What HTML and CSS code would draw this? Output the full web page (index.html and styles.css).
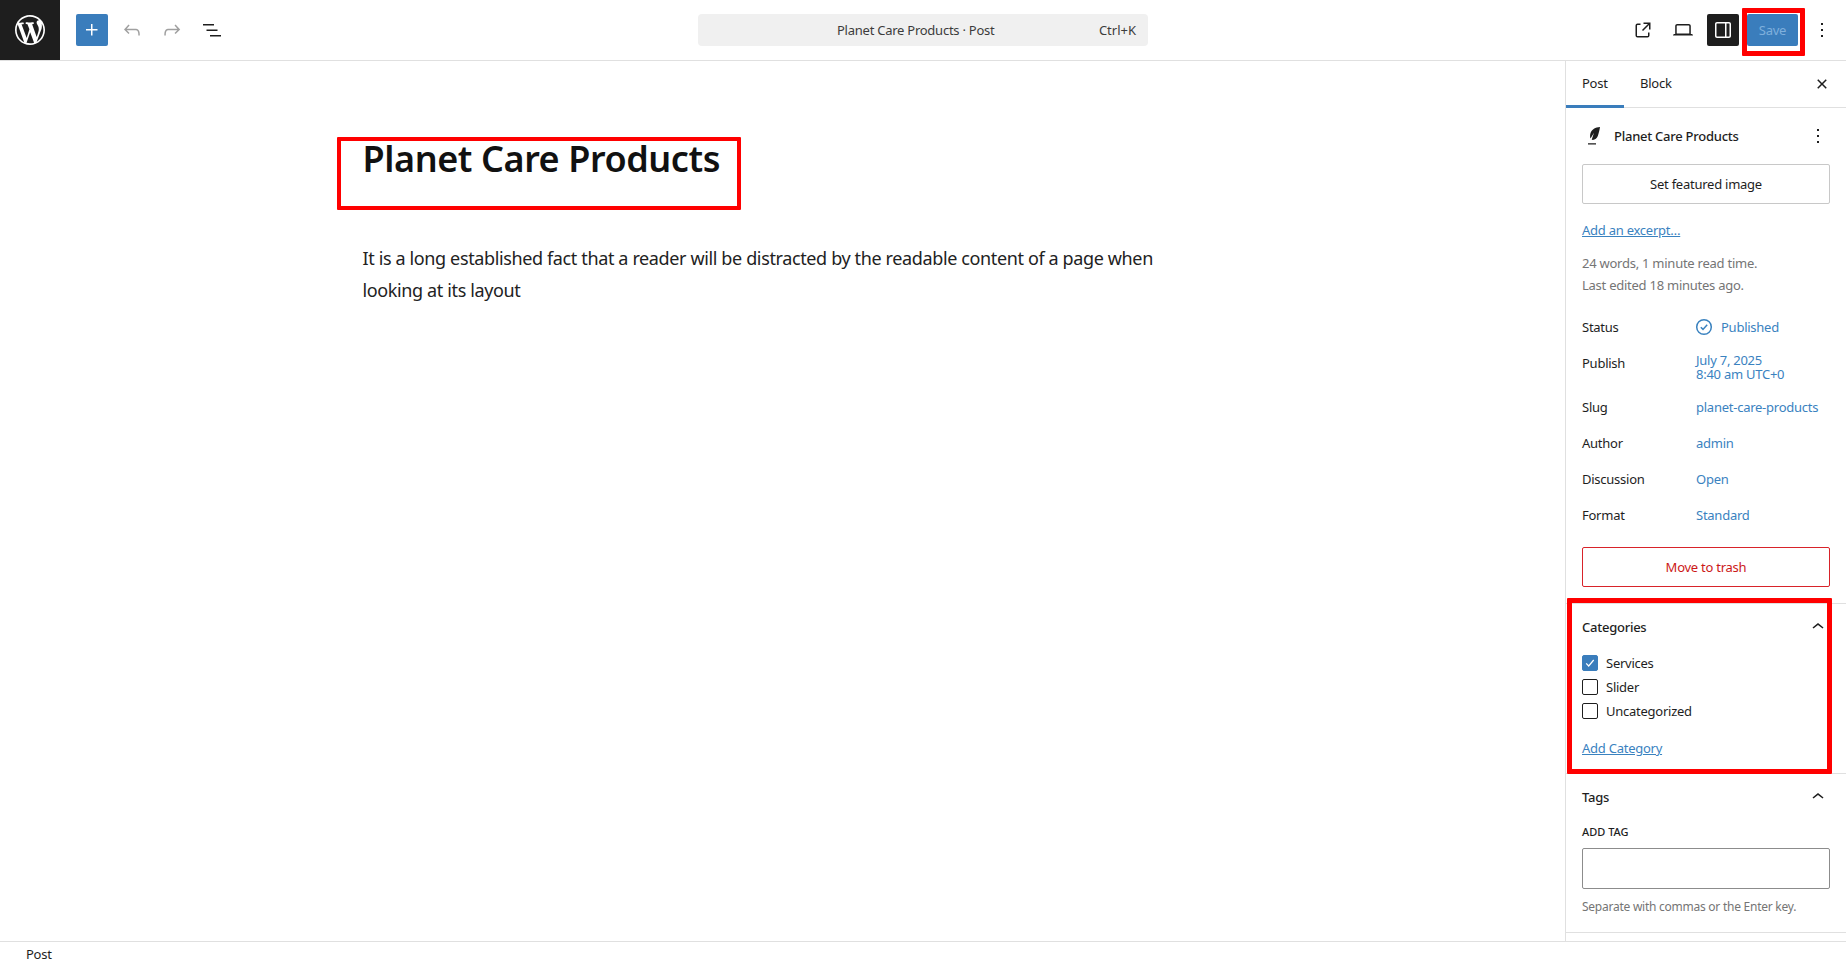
FILE: index.html
```html
<!DOCTYPE html>
<html lang="en">
<head>
<meta charset="utf-8">
<title>Planet Care Products</title>
<link rel="stylesheet" href="styles.css">
</head>
<body>
<div class="app">
  <header class="topbar">
    <div class="top-left">
      <div class="logo"><svg viewBox="0 0 20 20" width="30" height="30"><path fill="#fff" d="M20 10c0-5.51-4.49-10-10-10C4.48 0 0 4.49 0 10c0 5.52 4.48 10 10 10 5.51 0 10-4.48 10-10zM7.78 15.37L4.37 6.22c.55-.02 1.17-.08 1.17-.08.5-.06.44-1.13-.06-1.11 0 0-1.45.11-2.37.11-.18 0-.37 0-.58-.01C4.12 2.69 6.87 1.11 10 1.11c2.33 0 4.45.87 6.05 2.34-.68-.11-1.65.39-1.65 1.58 0 .74.45 1.36.9 2.1.35.61.55 1.36.55 2.46 0 1.49-1.4 5-1.4 5l-3.03-8.37c.54-.02.82-.17.82-.17.5-.05.44-1.25-.06-1.22 0 0-1.44.12-2.38.12-.87 0-2.33-.12-2.33-.12-.5-.03-.56 1.2-.06 1.22l.92.08 1.26 3.41zM17.41 10c.24-.64.74-1.87.43-4.25.7 1.29 1.05 2.71 1.05 4.25 0 3.29-1.73 6.24-4.4 7.78.97-2.59 1.94-5.2 2.92-7.78zM6.1 18.09C3.12 16.65 1.11 13.53 1.11 10c0-1.3.23-2.48.72-3.59C3.25 10.3 4.67 14.2 6.1 18.09zm4.03-6.63l2.58 6.98c-.86.29-1.76.45-2.71.45-.79 0-1.57-.11-2.29-.33.81-2.38 1.62-4.74 2.42-7.1z"/></svg></div>
      <div class="tools">
        <div class="icon-btn add"><svg viewBox="0 0 24 24" width="24" height="24"><path d="M11 12.5V17.5H12.5V12.5H17.5V11H12.5V6H11V11H6V12.5H11Z"/></svg></div>
        <div class="icon-btn muted"><svg viewBox="0 0 24 24" width="24" height="24"><path d="M18.3 11.7c-.6-.6-1.4-.9-2.3-.9H6.7l2.9-3.3-1.1-1-4.5 5L8.5 16l1-1-2.7-2.7H16c.5 0 .9.2 1.3.5 1 1 1 3.4 1 4.5v.3h1.5v-.2c0-1.5 0-4.3-1.5-5.7z"/></svg></div>
        <div class="icon-btn muted"><svg viewBox="0 0 24 24" width="24" height="24"><path d="M15.6 6.5l-1.1 1 2.9 3.3H8c-.9 0-1.7.3-2.3.9-1.4 1.5-1.4 4.2-1.4 5.6v.2h1.5v-.3c0-1.1 0-3.5 1-4.5.3-.3.7-.5 1.3-.5h9.2L14.5 15l1.1 1.1 4.6-4.6-4.6-5z"/></svg></div>
        <div class="icon-btn"><svg viewBox="0 0 24 24" width="24" height="24"><path d="M3 6h11v1.5H3V6Zm3.5 5.5h11V13h-11v-1.5ZM21 17H10v1.5h11V17Z"/></svg></div>
      </div>
    </div>
    <div class="command">
      <span class="command-title">Planet Care Products · Post</span>
      <span class="command-key">Ctrl+K</span>
    </div>
    <div class="top-right">
      <div class="icon-btn"><svg viewBox="0 0 24 24" width="24" height="24"><path d="M19.5 4.5h-7V6h4.44l-5.97 5.97 1.06 1.06L18 7.06v4.44h1.5v-7Zm-13 1a2 2 0 0 0-2 2v10a2 2 0 0 0 2 2h10a2 2 0 0 0 2-2v-3H17v3a.5.5 0 0 1-.5.5h-10a.5.5 0 0 1-.5-.5v-10a.5.5 0 0 1 .5-.5h3V5.5h-3Z"/></svg></div>
      <div class="icon-btn"><svg viewBox="0 0 24 24" width="24" height="24"><path d="M20.5 16h-.7V8c0-1.1-.9-2-2-2H6.2c-1.1 0-2 .9-2 2v8h-.7c-.8 0-1.5.7-1.5 1.5h20c0-.8-.7-1.5-1.5-1.5zM5.7 8c0-.3.2-.5.5-.5h11.6c.3 0 .5.2.5.5v7.6H5.7V8z"/></svg></div>
      <div class="icon-btn dark"><svg viewBox="0 0 24 24" width="24" height="24"><path d="M18 4H6c-1.1 0-2 .9-2 2v12c0 1.1.9 2 2 2h12c1.1 0 2-.9 2-2V6c0-1.1-.9-2-2-2zm-4 14.5H6c-.3 0-.5-.2-.5-.5V6c0-.3.2-.5.5-.5h8v13zm4.500-.5c0 .3-.2.5-.5.5h-2.500v-13H18c.3 0 .5.2.5.5v12z"/></svg></div>
      <div class="save">Save</div>
      <div class="icon-btn"><svg viewBox="0 0 24 24" width="24" height="24"><path d="M13 19h-2v-2h2v2zm0-6h-2v-2h2v2zm0-6h-2V5h2v2z"/></svg></div>
    </div>
  </header>

  <div class="workspace">
    <main class="editor">
      <div class="canvas">
        <h1 class="post-title">Planet Care Products</h1>
        <p class="post-body">It is a long established fact that a reader will be distracted by the readable content of a page when looking at its layout</p>
      </div>
    </main>

    <aside class="sidebar">
      <div class="tabs">
        <div class="tab active">Post</div>
        <div class="tab">Block</div>
        <div class="tab-close"><svg viewBox="0 0 24 24" width="24" height="24"><path d="M12 13.06l3.712 3.713 1.061-1.06L13.061 12l3.712-3.712-1.06-1.06L12 10.938 8.288 7.227l-1.061 1.06L10.939 12l-3.712 3.712 1.06 1.061L12 13.061z"/></svg></div>
      </div>

      <section class="panel summary">
        <div class="doc-head">
          <svg class="feather" viewBox="0 0 14 20" width="14" height="20"><path d="M13 1C8.500 1.200 4.600 3.200 3.400 7.600c-.5 1.800-.4 3.600.1 5L7 6.800 4.700 13.800c2.800.500 5.200-.9 6.100-3.700.9-2.900 1.700-5.700 2.200-9.100zM1 17.200h8v1.400H1z"/></svg>
          <span class="doc-title">Planet Care Products</span>
          <svg class="doc-more" viewBox="0 0 24 24" width="24" height="24"><path d="M13 19h-2v-2h2v2zm0-6h-2v-2h2v2zm0-6h-2V5h2v2z"/></svg>
        </div>
        <div class="btn-outline">Set featured image</div>
        <a class="link excerpt">Add an excerpt…</a>
        <div class="meta">
          <div>24 words, 1 minute read time.</div>
          <div>Last edited 18 minutes ago.</div>
        </div>
        <dl class="rows">
          <div class="row"><dt>Status</dt><dd class="status"><svg viewBox="0 0 18 18" width="18" height="18"><circle cx="9" cy="9" r="7.300" fill="none" stroke-width="1.500"/><path d="M5.800 9.200l2.200 2.200 4.200-4.600" fill="none" stroke-width="1.500"/></svg>Published</dd></div>
          <div class="row row-publish"><dt>Publish</dt><dd>July 7, 2025<br>8:40 am UTC+0</dd></div>
          <div class="row"><dt>Slug</dt><dd>planet-care-products</dd></div>
          <div class="row"><dt>Author</dt><dd>admin</dd></div>
          <div class="row"><dt>Discussion</dt><dd>Open</dd></div>
          <div class="row"><dt>Format</dt><dd>Standard</dd></div>
        </dl>
        <div class="btn-outline danger">Move to trash</div>
      </section>

      <section class="panel categories">
        <div class="panel-head"><span>Categories</span><svg viewBox="0 0 24 24" width="24" height="24"><path d="M6.500 12.400L12 8l5.500 4.400-.9 1.200L12 10l-4.500 3.600-1-1.200z"/></svg></div>
        <ul class="checks">
          <li><span class="box checked"><svg viewBox="0 0 16 16" width="16" height="16"><path d="M4.200 8.300l2.500 2.700 5-6" fill="none" stroke="#fff" stroke-width="1.200"/></svg></span>Services</li>
          <li><span class="box"></span>Slider</li>
          <li><span class="box"></span>Uncategorized</li>
        </ul>
        <a class="link add-cat">Add Category</a>
      </section>

      <section class="panel tags">
        <div class="panel-head"><span>Tags</span><svg viewBox="0 0 24 24" width="24" height="24"><path d="M6.500 12.400L12 8l5.500 4.400-.9 1.200L12 10l-4.500 3.600-1-1.200z"/></svg></div>
        <div class="tag-label">ADD TAG</div>
        <div class="tag-input"></div>
        <div class="tag-help">Separate with commas or the Enter key.</div>
      </section>
    </aside>
  </div>

  <footer class="statusbar">Post</footer>

  <div class="mark mark-title"></div>
  <div class="mark mark-save"></div>
  <div class="mark mark-cats"></div>
</div>
</body>
</html>
```

FILE: styles.css
```css
* { box-sizing: border-box; }
html, body { margin: 0; height: 100%; }
body {
  font-family: "Noto Sans", "Open Sans", sans-serif;
  font-size: 13px;
  letter-spacing: -0.25px;
  color: #1e1e1e;
  background: #fff;
  overflow: hidden;
}
.app { position: relative; display: flex; flex-direction: column; height: 966px; }

.topbar {
  display: grid;
  grid-template-columns: 1fr 450px 1fr;
  align-items: center;
  height: 61px;
  flex: none;
  border-bottom: 1px solid #e0e0e0;
}
.top-left { display: flex; align-items: center; gap: 16px; }
.logo {
  width: 60px; height: 60px;
  background: #1e1e1e;
  display: flex; align-items: center; justify-content: center;
}
.tools, .top-right { display: flex; align-items: center; gap: 8px; }
.top-right { justify-content: flex-end; padding-right: 8px; }
.icon-btn {
  width: 32px; height: 32px;
  border-radius: 2px;
  display: flex; align-items: center; justify-content: center;
  fill: #1e1e1e;
}
.icon-btn.add { background: #3a7dbc; fill: #fff; }
.icon-btn.muted { fill: #a0a0a0; }
.icon-btn.dark { background: #1e1e1e; fill: #fff; }
.save {
  width: 51px; height: 32px;
  background: #3a7dbc;
  color: #7fb0dc;
  border-radius: 2px;
  display: flex; align-items: center; justify-content: center;
}
.command {
  height: 32px;
  background: #f0f0f0;
  border-radius: 4px;
  display: flex; align-items: center;
  color: #3c3c3c;
  padding: 0 12px 0 139px;
}
.command-title { flex: 1; }
.command-key { letter-spacing: 0; }

.workspace { flex: 1; display: flex; min-height: 0; }
.editor { flex: 1; min-width: 0; }
.canvas { width: 840px; margin: 0 auto; padding-top: 74px; }
.post-title {
  margin: 0;
  font-size: 36px;
  line-height: 48px;
  font-weight: 600;
  letter-spacing: -0.42px;
  color: #111;
}
.post-body {
  margin: 59px 0 0;
  font-size: 18px;
  line-height: 32px;
  letter-spacing: -0.37px;
  color: #222;
}

.sidebar {
  width: 281px;
  flex: none;
  border-left: 1px solid #e0e0e0;
  overflow: hidden;
}
.tabs {
  display: flex; align-items: center;
  height: 47px;
  border-bottom: 1px solid #e0e0e0;
  position: relative;
}
.tab { height: 47px; padding: 0 16px; line-height: 44px; }
.tab.active { box-shadow: inset 0 -3px 0 #3a7dbc; width: 58px; }
.tab-close { margin-left: auto; margin-right: 12px; height: 24px; fill: #1e1e1e; }

.panel { padding: 0 16px; border-bottom: 1px solid #e0e0e0; }
.summary { padding-top: 12px; padding-bottom: 16px; }
.doc-head { display: flex; align-items: center; height: 32px; gap: 13px; }
.feather { margin-left: 5px; fill: #1e1e1e; }
.doc-title { flex: 1; font-weight: 500; }
.doc-more { fill: #1e1e1e; }
.btn-outline {
  height: 40px;
  margin-top: 12px;
  border: 1px solid #c8c8c8;
  border-radius: 2px;
  display: flex; align-items: center; justify-content: center;
}
.btn-outline.danger { margin-top: 14px; border-color: #d8232a; color: #cc1818; }
.link { display: block; color: #3a82bf; text-decoration: underline; line-height: 20px; }
.excerpt { margin-top: 16px; }
.meta { margin-top: 12px; color: #757575; line-height: 22px; }
.rows { margin: 13px 0 0; }
.row { display: flex; align-items: center; min-height: 36px; }
.row dt { width: 114px; flex: none; }
.row dd { margin: 0; color: #3a82bf; line-height: 14px; }
.row-publish { align-items: flex-start; min-height: 44px; }
.row-publish dt { line-height: 36px; }
.row-publish dd { padding-top: 8px; }
.status { display: flex; align-items: center; gap: 8px; }
.status svg { stroke: #3a82bf; margin-left: -1px; }

.panel-head {
  display: flex; align-items: center; justify-content: space-between;
  height: 24px;
  margin-top: 11px;
  font-weight: 500;
}
.panel-head svg { fill: #1e1e1e; }
.checks { list-style: none; margin: 16px 0 0; padding: 0; }
.checks li { display: flex; align-items: center; height: 16px; margin-bottom: 8px; gap: 8px; }
.box { width: 16px; height: 16px; border: 1px solid #1e1e1e; border-radius: 2px; flex: none; }
.box.checked { background: #3a7dbc; border-color: #3a7dbc; }
.box.checked svg { display: block; margin: -1px; }
.add-cat { margin-top: 19px; }
.categories { padding-bottom: 15px; }
.tag-label { margin-top: 15px; font-size: 11px; line-height: 16px; font-weight: 500; letter-spacing: 0; }
.tag-input { margin-top: 8px; height: 41px; border: 1px solid #8c8c8c; border-radius: 2px; }
.tag-help { margin-top: 8px; color: #757575; font-size: 12px; line-height: 20px; }
.tags { padding-bottom: 15px; }

.statusbar {
  height: 25px;
  flex: none;
  border-top: 1px solid #e0e0e0;
  padding-left: 26px;
  line-height: 24px;
}

.mark { position: absolute; border: 5px solid #f00; border-radius: 1px; }
.mark-title { left: 337px; top: 137px; width: 404px; height: 73px; border-width: 4px; }
.mark-save { left: 1742px; top: 8px; width: 63px; height: 48px; }
.mark-cats { left: 1567px; top: 598px; width: 265px; height: 176px; }
```
